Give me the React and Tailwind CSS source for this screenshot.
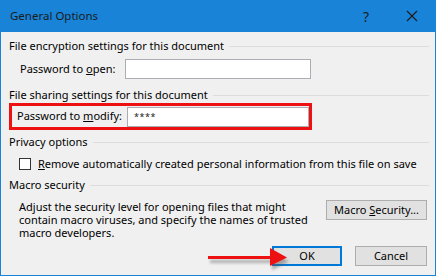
import React from "react";

function SectionHeader({ children }) {
  return (
    <div className="flex items-center gap-[5px] h-4">
      <span className="whitespace-nowrap">{children}</span>
      <div className="flex-1 h-px bg-[#dcdcdc]" />
    </div>
  );
}

function Button({ children, primary, className = "" }) {
  return (
    <div
      className={`flex items-center justify-center h-[20px] bg-[#e1e1e1] ${
        primary ? "border-2 border-[#0078d7]" : "border border-[#adadad]"
      } ${className}`}
    >
      <span className="whitespace-nowrap">{children}</span>
    </div>
  );
}

export default function App() {
  return (
    <div
      className="relative w-[437px] h-[278px] bg-white text-[11px] text-[#000] overflow-hidden whitespace-nowrap"
      style={{ fontFamily: '"Segoe UI", "Noto Sans", sans-serif' }}
    >
      <div className="w-[436px] h-[276px] border border-[#1883d7] border-t-0 bg-[#f0f0f0] flex flex-col">
        {/* Title bar */}
        <div className="h-[32px] bg-[#1883d7] flex items-center pl-[9px] text-[#1b1b1b]">
          <span className="flex-1 text-[11.5px]">General Options</span>
          <span className="w-[46px] text-center text-[14px]">?</span>
          <div className="w-[46px] flex justify-center">
            <svg width="12" height="12" viewBox="0 0 12 12">
              <path d="M1 1 L11 11 M11 1 L1 11" stroke="#1b1b1b" strokeWidth="1.1" />
            </svg>
          </div>
        </div>

        <div className="flex flex-col pl-[8px] pr-[6px] pt-[6px]">
          <SectionHeader>File encryption settings for this document</SectionHeader>
          <div className="flex items-center h-[20px] mt-[5px] pl-[11px]">
            <span className="w-[105px]">
              Password to <u>o</u>pen:
            </span>
            <div className="w-[186px] h-[20px] bg-white border border-[#abadb3]" />
          </div>

          <div className="mt-[8px]">
            <SectionHeader>File sharing settings for this document</SectionHeader>
          </div>
          <div className="flex items-center w-[303px] h-[27px] border-[3px] border-[#ee1111] pl-[5px]">
            <span className="w-[110px]">
              Password to <u>m</u>odify:
            </span>
            <div className="w-[182px] h-[20px] bg-white border border-[#abadb3] flex items-center pl-[6px] text-[9px] text-[#222] tracking-[0.5px]">
              ****
            </div>
          </div>

          <div className="mt-[4px]">
            <SectionHeader>Privacy options</SectionHeader>
          </div>
          <div className="flex items-center h-[20px] mt-[4px] pl-[10px] gap-[7px]">
            <div className="w-[12px] h-[12px] bg-white border border-[#333]" />
            <span>
              <u>R</u>emove automatically created personal information from this file on save
            </span>
          </div>

          <div className="mt-[3px]">
            <SectionHeader>Macro security</SectionHeader>
          </div>
          <div className="flex mt-[7px] pl-[10px]">
            <div className="flex-1 flex flex-col">
              <div className="h-[13px] leading-[13px]">Adjust the security level for opening files that might</div>
              <div className="h-[13px] leading-[13px]">contain macro viruses, and specify the names of trusted</div>
              <div className="h-[13px] leading-[13px]">macro developers.</div>
            </div>
            <Button className="w-[101px] mr-[2px]">
              Macro <u>S</u>ecurity...
            </Button>
          </div>

          <div className="flex justify-end gap-[13px] mt-[7px] pr-[2px]">
            <Button primary className="w-[70px]">
              OK
            </Button>
            <Button className="w-[72px]">Cancel</Button>
          </div>
        </div>
      </div>

      {/* Red annotation arrow */}
      <svg className="absolute left-[200px] top-[244px]" width="92" height="28" viewBox="0 0 92 28">
        <defs>
          <filter id="sh" x="-20%" y="-50%" width="140%" height="200%">
            <feGaussianBlur stdDeviation="1.5" />
          </filter>
        </defs>
        <g opacity="0.45" filter="url(#sh)" transform="translate(2 4)">
          <rect x="8" y="12" width="64" height="3" fill="#555" />
          <path d="M70 4 L87 13.5 L70 22 Z" fill="#555" />
        </g>
        <rect x="8" y="12" width="64" height="3" fill="#ee1111" />
        <path d="M70 4 L87 13.5 L70 22 Z" fill="#ee1111" />
      </svg>
    </div>
  );
}
